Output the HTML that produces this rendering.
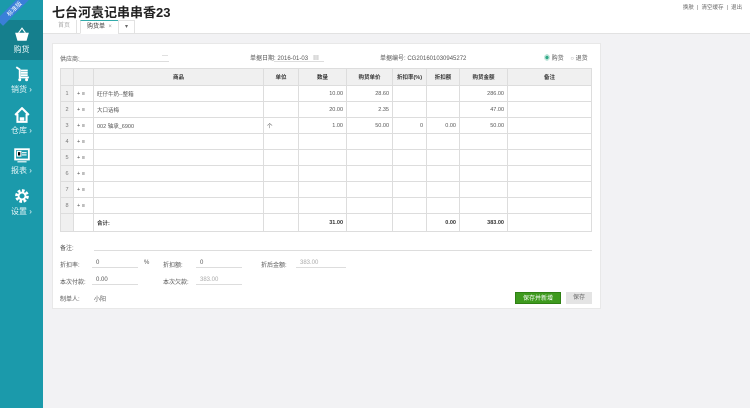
<!DOCTYPE html><html><head><meta charset="utf-8"><style>
*{margin:0;padding:0;box-sizing:border-box}
body{width:750px;height:408px;overflow:hidden;background:#f2f2f4;font-family:"Liberation Sans","Noto Sans CJK SC",sans-serif;font-size:6px;color:#555;position:relative}
.side{position:absolute;left:0;top:0;width:43px;height:408px;background:#1b9aab}
.active{position:absolute;left:0;top:20px;width:43px;height:40px;background:#157f8d}
.nav{position:absolute;left:0;width:43px;text-align:center;color:#e8f6f8;font-size:8px}
.nav svg{display:block;margin:0 auto 2px}
.top{position:absolute;left:43px;top:0;right:0;height:34px;background:#fff;border-bottom:1px solid #e2e2e2}
.title{position:absolute;left:52px;top:2px;font-size:13px;font-weight:bold;color:#222}
.tr{position:absolute;right:8px;top:3px;font-size:5.5px;color:#666}
.tab{position:absolute;top:20px;height:14px;font-size:6px;line-height:13px;padding:0 6px}
.card{position:absolute;left:52px;top:43px;width:549px;height:266px;background:#fff;border:1px solid #e8e8e8}
.abs{position:absolute;white-space:nowrap}
.line{position:absolute;border-bottom:1px solid #ddd;height:1px}
table{position:absolute;left:60px;top:68px;border-collapse:collapse;width:532px}
td,th{border:1px solid #ddd;height:16px;font-size:5.5px;padding:0 3px;font-weight:normal}
th{background:#f0f0f0;color:#333;font-weight:bold;height:17px}
td.n{text-align:right}
td.c{background:#f0f0f0;text-align:center;color:#777}
tr.tot td{height:18px;font-weight:bold;color:#333}
.btn{position:absolute;height:12px;font-size:6px;line-height:12px;text-align:center}
</style></head><body>
<div class="side"></div>
<div class="active"></div>
<div class="abs" style="left:-6px;top:4px;transform:rotate(-45deg);background:#3a7fd8;color:#fff;font-size:6px;width:40px;text-align:center">标准版</div>
<div class="nav" style="top:27px"><svg width="16" height="15" viewBox="0 0 14 13"><path d="M1 5h12l-2 7H3z" fill="#fff"/><path d="M4 5l3-4 3 4" stroke="#fff" fill="none"/></svg>购货</div>
<div class="nav" style="top:66px"><svg width="16" height="16" viewBox="0 0 14 14"><path d="M2 1l3 2v7h8M6 4h6M6 6h6M6 8h6" stroke="#fff" stroke-width="1.6" fill="none"/><circle cx="5" cy="12" r="1.3" fill="#fff"/><circle cx="11" cy="12" r="1.3" fill="#fff"/></svg>销货 ›</div>
<div class="nav" style="top:107px"><svg width="16" height="16" viewBox="0 0 14 14"><path d="M1 7L7 1l6 6M3 6v7h8V6" stroke="#fff" stroke-width="1.8" fill="none"/><rect x="5" y="9" width="4" height="3" fill="#fff"/></svg>仓库 ›</div>
<div class="nav" style="top:148px"><svg width="16" height="15" viewBox="0 0 14 13"><rect x="1" y="1" width="12" height="9" stroke="#fff" stroke-width="1.6" fill="none"/><path d="M3 3h3v4H3zM7 4h4M7 6h4M3 12h8" stroke="#fff"/></svg>报表 ›</div>
<div class="nav" style="top:188px"><svg width="16" height="16" viewBox="0 0 14 14"><circle cx="7" cy="7" r="4.5" stroke="#fff" stroke-width="3" fill="none" stroke-dasharray="2.2 1.3"/><circle cx="7" cy="7" r="3" stroke="#fff" stroke-width="1.6" fill="none"/></svg>设置 ›</div>
<div class="top"></div>
<div class="title">七台河袁记串串香23</div>
<div class="tr">换肤 &nbsp;|&nbsp; 清空缓存 &nbsp;|&nbsp; 退出</div>
<div class="tab" style="left:52px;color:#aaa;border-right:1px solid #e2e2e2">首页</div>
<div class="tab" style="left:80px;color:#333;border:1px solid #e2e2e2;border-top:1px solid #3aa;border-bottom:1px solid #fff;background:#fff">购货单 &nbsp;<span style="color:#999">×</span></div>
<div class="tab" style="left:118px;color:#666;border:1px solid #e2e2e2;border-bottom:none">▾</div>
<div class="card"></div>
<div class="abs" style="left:60px;top:54px">供应商:</div><div class="line" style="left:79px;top:61px;width:90px"></div><div class="abs" style="left:162px;top:53px">···</div>
<div class="abs" style="left:250px;top:53px">单据日期: 2016-01-03 &nbsp;&nbsp;<span style="color:#aaa">▦</span></div><div class="line" style="left:274px;top:61px;width:50px"></div>
<div class="abs" style="left:380px;top:53px">单据编号: CG201601030945272</div>
<div class="abs" style="left:544px;top:53px"><span style="color:#3a8">◉</span> 购货 &nbsp;&nbsp; <span style="color:#999">○</span> 退货</div>
<table>
<tr><th style="width:13px"></th><th style="width:20px"></th><th style="width:170px">商品</th><th style="width:35px">单位</th><th style="width:48px">数量</th><th style="width:46px">购货单价</th><th style="width:34px">折扣率(%)</th><th style="width:33px">折扣额</th><th style="width:48px">购货金额</th><th>备注</th></tr>
<tr><td class="c">1</td><td>+ ≡</td><td>旺仔牛奶--整箱</td><td></td><td class="n">10.00</td><td class="n">28.60</td><td></td><td></td><td class="n">286.00</td><td></td></tr>
<tr><td class="c">2</td><td>+ ≡</td><td>大口话梅</td><td></td><td class="n">20.00</td><td class="n">2.35</td><td></td><td></td><td class="n">47.00</td><td></td></tr>
<tr><td class="c">3</td><td>+ ≡</td><td>002 轴承_6900</td><td>个</td><td class="n">1.00</td><td class="n">50.00</td><td class="n">0</td><td class="n">0.00</td><td class="n">50.00</td><td></td></tr>
<tr><td class="c">4</td><td>+ ≡</td><td></td><td></td><td></td><td></td><td></td><td></td><td></td><td></td></tr>
<tr><td class="c">5</td><td>+ ≡</td><td></td><td></td><td></td><td></td><td></td><td></td><td></td><td></td></tr>
<tr><td class="c">6</td><td>+ ≡</td><td></td><td></td><td></td><td></td><td></td><td></td><td></td><td></td></tr>
<tr><td class="c">7</td><td>+ ≡</td><td></td><td></td><td></td><td></td><td></td><td></td><td></td><td></td></tr>
<tr><td class="c">8</td><td>+ ≡</td><td></td><td></td><td></td><td></td><td></td><td></td><td></td><td></td></tr>
<tr class="tot"><td class="c"></td><td></td><td>合计:</td><td></td><td class="n">31.00</td><td></td><td></td><td class="n">0.00</td><td class="n">383.00</td><td></td></tr>
</table>
<div class="abs" style="left:60px;top:243px">备注:</div><div class="line" style="left:94px;top:250px;width:498px"></div>
<div class="abs" style="left:60px;top:260px">折扣率:</div><div class="abs" style="left:96px;top:260px">0</div><div class="line" style="left:92px;top:267px;width:46px"></div><div class="abs" style="left:144px;top:260px">%</div>
<div class="abs" style="left:163px;top:260px">折扣额:</div><div class="abs" style="left:200px;top:260px">0</div><div class="line" style="left:196px;top:267px;width:46px"></div>
<div class="abs" style="left:261px;top:260px">折后金额:</div><div class="abs" style="left:300px;top:260px;color:#aaa">383.00</div><div class="line" style="left:296px;top:267px;width:50px"></div>
<div class="abs" style="left:60px;top:277px">本次付款:</div><div class="abs" style="left:96px;top:277px">0.00</div><div class="line" style="left:92px;top:284px;width:46px"></div>
<div class="abs" style="left:163px;top:277px">本次欠款:</div><div class="abs" style="left:200px;top:277px;color:#aaa">383.00</div><div class="line" style="left:196px;top:284px;width:46px"></div>
<div class="abs" style="left:60px;top:294px">制单人:</div><div class="abs" style="left:94px;top:294px">小阳</div>
<div class="btn" style="left:515px;top:292px;width:46px;background:#3e9a1e;color:#fff;border:1px solid #2f7f14">保存并新增</div>
<div class="btn" style="left:566px;top:292px;width:26px;background:#e4e4e4;color:#666">保存</div>
</body></html>
